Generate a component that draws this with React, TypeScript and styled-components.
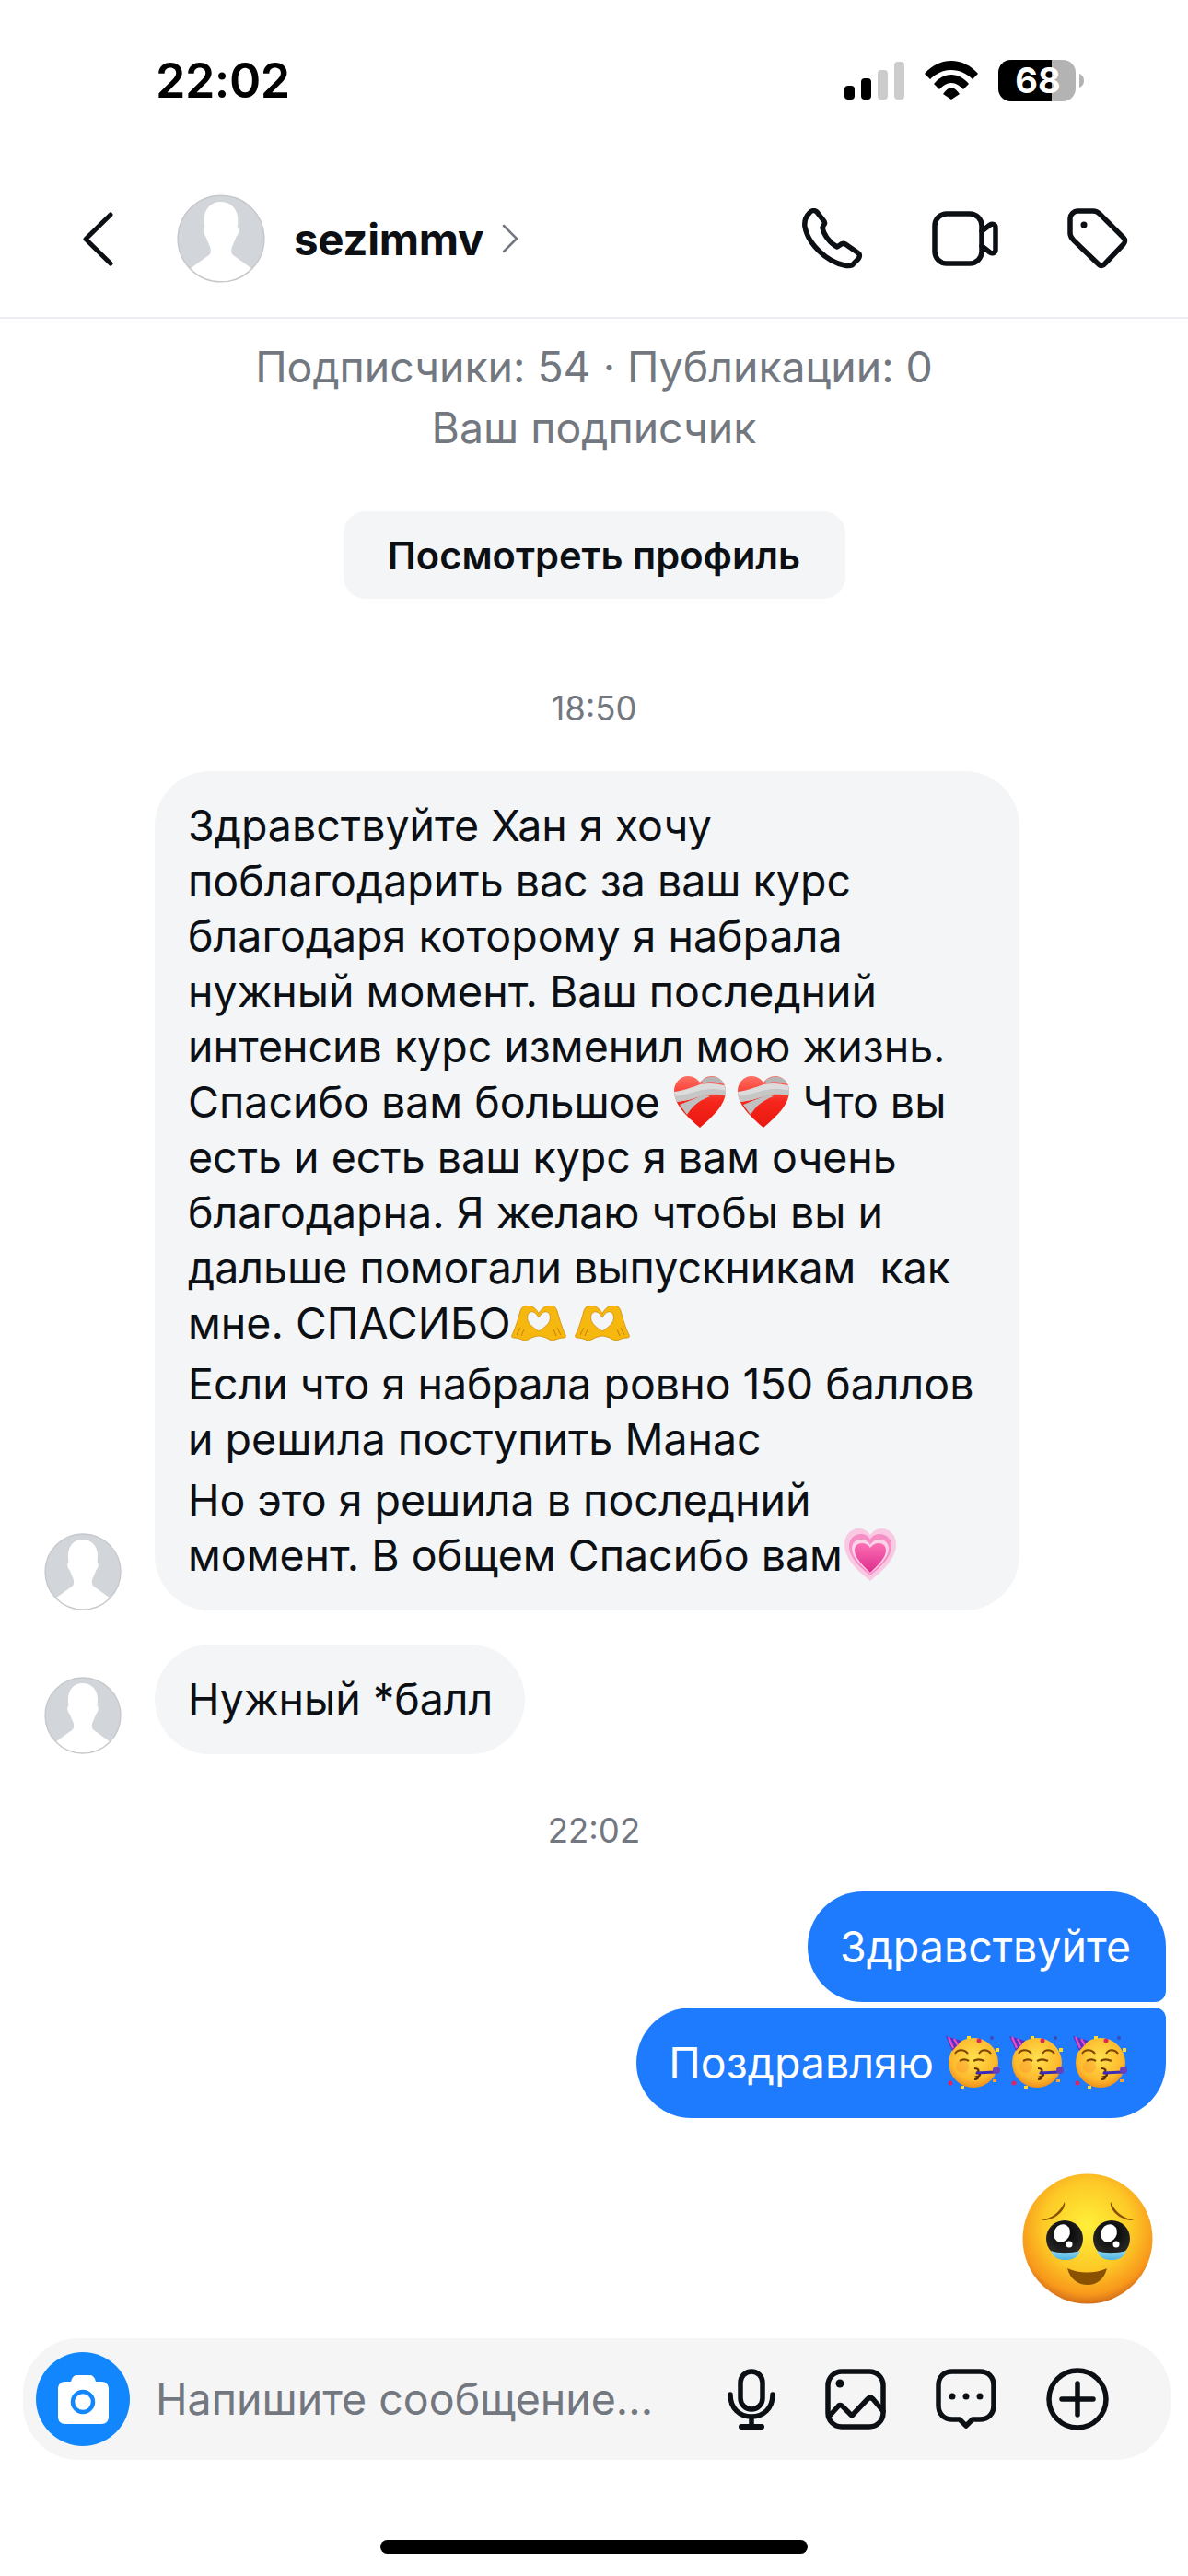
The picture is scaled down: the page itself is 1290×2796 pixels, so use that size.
import React from 'react';
import styled, { createGlobalStyle } from 'styled-components';

const Global = createGlobalStyle`
  html, body { margin: 0; padding: 0; background: #fff; }
  body { font-family: Inter, "Noto Sans", "Liberation Sans", sans-serif; color: #0c1014; }
`;

const Page = styled.div`
  width: 1290px;
  height: 2796px;
  display: flex;
  flex-direction: column;
  background: #fff;
  overflow: hidden;
`;

const StatusBar = styled.div`
  height: 174px;
  padding: 0 113px 0 169px;
  display: flex;
  align-items: center;
  justify-content: space-between;
  box-sizing: border-box;
  flex: none;
`;

const Time = styled.div`
  font-size: 52px;
  font-weight: 600;
  color: #000;
  letter-spacing: -0.5px;
`;

const StatusIcons = styled.div`
  display: flex;
  align-items: center;
  gap: 22px;
`;

const Header = styled.div`
  height: 172px;
  flex: none;
  box-sizing: border-box;
  padding: 0 65px 0 90px;
  display: flex;
  align-items: center;
  border-bottom: 2px solid #eceef1;
`;

const HeaderAvatar = styled.div`
  margin-left: 69px;
`;

const HeaderName = styled.div`
  font-size: 47.5px;
  font-weight: 700;
  margin-left: 31px;
  letter-spacing: -0.3px;
`;

const HeaderActions = styled.div`
  margin-left: auto;
  display: flex;
  align-items: center;
  gap: 75px;
`;

const Avatar = styled.svg<{ $size: number }>`
  width: ${(p) => p.$size}px;
  height: ${(p) => p.$size}px;
  flex: none;
  display: block;
`;

const Profile = styled.div`
  display: flex;
  flex-direction: column;
  align-items: center;
  padding-top: 19px;
  flex: none;
`;

const ProfileLine = styled.div`
  font-size: 46.4px;
  line-height: 66px;
  color: #737880;
`;

const ProfileButton = styled.div`
  margin-top: 58px;
  width: 545px;
  height: 95px;
  border-radius: 24px;
  background: #f3f5f7;
  display: flex;
  align-items: center;
  justify-content: center;
  font-size: 41.6px;
  font-weight: 600;
`;

const Stamp = styled.div<{ $top: number }>`
  margin-top: ${(p) => p.$top}px;
  font-size: 36.5px;
  line-height: 44px;
  color: #737880;
  text-align: center;
`;

const Thread = styled.div`
  flex: 1;
  display: flex;
  flex-direction: column;
`;

const IncomingRow = styled.div<{ $top: number }>`
  margin-top: ${(p) => p.$top}px;
  padding-left: 48px;
  display: flex;
  align-items: flex-end;
  gap: 36px;
`;

const IncomingBubble = styled.div<{ $width: number }>`
  width: ${(p) => p.$width}px;
  box-sizing: border-box;
  background: #f3f5f7;
  border-radius: 60px;
  padding: 29px 36px 30px;
  display: flex;
  flex-direction: column;
  gap: 6px;
`;

const Paragraph = styled.div``;

const Line = styled.div`
  font-size: 46.5px;
  line-height: 60px;
  white-space: pre;
  display: flex;
  align-items: center;
`;

const OutgoingColumn = styled.div`
  margin-top: 44px;
  padding-right: 24px;
  display: flex;
  flex-direction: column;
  align-items: flex-end;
  gap: 6px;
`;

const OutgoingBubble = styled.div<{ $first: boolean }>`
  height: 120px;
  box-sizing: border-box;
  padding: 0 ${(p) => (p.$first ? 38 : 41)}px 0 35px;
  background: #1f7bfd;
  color: #fff;
  font-size: 46.5px;
  white-space: pre;
  display: flex;
  align-items: center;
  border-radius: ${(p) => (p.$first ? '60px 60px 12px 60px' : '60px 12px 60px 60px')};
`;

const BigEmoji = styled.div`
  margin-top: 60px;
  padding-right: 38px;
  display: flex;
  justify-content: flex-end;
`;

const BigEmojiArt = styled.svg`
  display: block;
  width: 142px;
  height: 142px;
`;

const Composer = styled.div`
  margin: 0 19px 0 25px;
  height: 132px;
  flex: none;
  border-radius: 60px;
  background: #f5f5f6;
  display: flex;
  align-items: center;
  padding: 0 67px 0 14px;
`;

const CameraButton = styled.div`
  width: 102px;
  height: 102px;
  flex: none;
  border-radius: 50%;
  background: #1287fd;
  display: flex;
  align-items: center;
  justify-content: center;
`;

const Placeholder = styled.div`
  margin-left: 28px;
  font-size: 46.5px;
  color: #737880;
  white-space: nowrap;
`;

const ComposerActions = styled.div`
  margin-left: auto;
  display: flex;
  align-items: center;
  gap: 54px;
`;

const HomeArea = styled.div`
  height: 126px;
  flex: none;
  display: flex;
  align-items: flex-end;
  justify-content: center;
  padding-bottom: 24px;
  box-sizing: border-box;
`;

const HomeBar = styled.div`
  width: 464px;
  height: 15px;
  border-radius: 8px;
  background: #000;
`;

const Icon = styled.svg`
  display: block;
  flex: none;
  fill: none;
  stroke: #0c1014;
  stroke-width: 5.5;
  stroke-linecap: round;
  stroke-linejoin: round;
`;

const NameChevron = styled(Icon)`
  margin-left: 20px;
  stroke: #737880;
  stroke-width: 2.5;
`;

const InlineEmoji = styled.svg`
  width: 60px;
  height: 60px;
  flex: none;
  display: block;
`;

const HandsEmoji = styled.svg`
  width: 60px;
  height: 38px;
  flex: none;
  display: block;
`;

const EmojiGap = styled.span`
  width: 9px;
  flex: none;
`;

function UserAvatar({ size }: { size: number }) {
  return (
    <Avatar $size={size} viewBox="0 0 84 84">
      <circle cx="42" cy="42" r="41" fill="#d2d5da" />
      <path
        fill="#fff"
        d="M42 7C51 7 58 14 58 24C58 27 58 29 57.500 31C59.500 33 59 38 56.500 40C55 44 53 48 52 51C51.500 54 52 57 54 58L72 71C65 79 54 83 42 83C30 83 19 79 12 71L30 58C32 57 32.500 54 32 51C31 48 29 44 27.500 40C25 38 24.500 33 26.500 31C26 29 26 27 26 24C26 14 32 7 42 7Z"
      />
      <circle cx="42" cy="42" r="41" fill="none" stroke="#c6c8cc" strokeWidth="1.300" />
    </Avatar>
  );
}

function BandagedHeart() {
  return (
    <InlineEmoji viewBox="0 0 60 60">
      <defs>
        <linearGradient id="bh-red" x1="0" y1="0" x2="0" y2="1">
          <stop offset="0" stopColor="#ff7468" />
          <stop offset="0.5" stopColor="#f5261c" />
          <stop offset="1" stopColor="#e8160f" />
        </linearGradient>
        <clipPath id="bh-clip">
          <path d="M30 58C20 49 2 35 2 18 2 9 9 2 17 2c6 0 10 3 13 7 3-4 7-7 13-7 8 0 15 7 15 16 0 17-18 31-28 40z" />
        </clipPath>
      </defs>
      <g clipPath="url(#bh-clip)">
        <rect width="60" height="60" fill="url(#bh-red)" />
        <path d="M2 19C12 18 22 14 30 11 40 9 50 10 60 13V23C48 21 40 21 33 23 24 26 12 30 2 30z" fill="#dcdcdc" />
        <path d="M8 33L35 22 41 24C30 28 22 34 16 44z" fill="#c0c0c0" />
        <path d="M32 7C38 1 52 0 60 12 48 8 40 7 33 10z" fill="#b5b5b5" />
        <path d="M2 24C12 23 24 19 33 17 42 15 50 16 60 18V23C48 21 40 21 33 23 24 26 12 30 2 30z" fill="#c6c6c6" />
      </g>
    </InlineEmoji>
  );
}

function HeartHands() {
  return (
    <HandsEmoji viewBox="0 0 60 38">
      <path
        fillRule="evenodd"
        fill="#f6b80f"
        stroke="#d08a06"
        strokeWidth="0.8"
        d="M30 9C28 4 23 0 18 0 14 0 11 2 10 6 8 13 5 24 1 32 0 34 1 35 3 35 6 35 10 36 14 38 17 38 20 36 22 35 25 34 28 33 30 33 32 33 35 34 38 35 40 36 43 38 46 38 50 36 54 35 57 35 59 35 60 34 59 32 55 24 52 13 50 6 49 2 46 0 42 0 37 0 32 4 30 9ZM30 13C27 8 24 6 21 7 18 8 17 12 18 16 19 20 24 24 30 28 36 24 41 20 42 16 43 12 42 8 39 7 36 6 33 8 30 13Z"
      />
      <path d="M10 24L6 32M14 26L11 33M50 24L54 32M46 26L49 33" stroke="#c47f06" strokeWidth="1" fill="none" />
    </HandsEmoji>
  );
}

function GrowingHeart() {
  return (
    <InlineEmoji viewBox="0 0 60 60">
      <defs>
        <linearGradient id="gh-core" x1="0" y1="0" x2="0" y2="1">
          <stop offset="0" stopColor="#fb6fb4" />
          <stop offset="1" stopColor="#de2c8c" />
        </linearGradient>
      </defs>
      <path d="M30 58C18 48 2 35 2 18 2 8 9 1 18 1c5 0 9 3 12 7 3-4 7-7 12-7 9 0 16 7 16 17 0 17-16 30-28 40z" fill="#f9c9e4" />
      <path d="M30 52C20 44 7 33 7 20 7 12 13 7 20 7c4 0 8 2 10 6 2-4 6-6 10-6 7 0 13 5 13 13 0 13-13 24-23 32z" fill="#f58fc6" />
      <path d="M30 50C22 43 10 33 10 23c0-6 4-10 10-10 4 0 8 2 10 6 2-4 6-6 10-6 6 0 10 4 10 10 0 10-12 20-20 27z" fill="#fbd3e8" />
      <path d="M30 49C23 42 13 33 13 25c0-5 3-8 8-8 4 0 7 2 9 5 2-3 5-5 9-5 5 0 8 3 8 8 0 8-10 17-17 24z" fill="url(#gh-core)" />
    </InlineEmoji>
  );
}

function PartyFace() {
  return (
    <InlineEmoji viewBox="0 0 60 60">
      <defs>
        <radialGradient id="pf-face" cx="0.5" cy="0.4" r="0.6">
          <stop offset="0" stopColor="#ffe04d" />
          <stop offset="0.75" stopColor="#fdb92c" />
          <stop offset="1" stopColor="#ee8f1c" />
        </radialGradient>
      </defs>
      <circle cx="30" cy="30" r="27" fill="url(#pf-face)" />
      <path d="M0 1l17 5L7 17z" fill="#5b2fc4" />
      <path d="M3 2l5 12M9 4l4 7" stroke="#ec4fbe" strokeWidth="2.200" />
      <circle cx="18" cy="34" r="7" fill="#fb8f2e" opacity="0.35" />
      <path d="M10 20c3-5 10-5 14 0M36 20c3-5 9-5 13 0" stroke="#7a4500" strokeWidth="2" fill="none" />
      <path d="M15 28c3-2 7-2 10 0M30 28c3-2 8-2 12 0" stroke="#7a4500" strokeWidth="2.200" fill="none" />
      <path d="M31 36c4 0 6 2 3 5 4 1 4 3 0 4 2 1 1 3-3 3" stroke="#5a3000" strokeWidth="2.200" fill="none" />
      <path d="M33 41l21-1" stroke="#3b2bb8" strokeWidth="3" />
      <circle cx="55" cy="38" r="4" fill="#6b3fb8" />
      <rect x="54" y="14" width="4" height="4" fill="#ffd92e" />
      <circle cx="36" cy="6" r="2.500" fill="#e0245e" />
      <rect x="23" y="1" width="4" height="3" fill="#ffd92e" />
      <circle cx="50" cy="3" r="2" fill="#3b4bb8" />
      <circle cx="5" cy="52" r="2.500" fill="#e0245e" />
      <rect x="16" y="55" width="4" height="3" fill="#ffd92e" />
      <rect x="51" y="48" width="4" height="3" fill="#ff9f2e" />
    </InlineEmoji>
  );
}

function PleadingFace() {
  return (
    <BigEmojiArt viewBox="0 0 142 142">
      <defs>
        <radialGradient id="pl-face" cx="0.5" cy="0.4" r="0.62">
          <stop offset="0" stopColor="#fff03a" />
          <stop offset="0.55" stopColor="#fdc926" />
          <stop offset="0.85" stopColor="#f8981b" />
          <stop offset="1" stopColor="#c8641a" />
        </radialGradient>
        <radialGradient id="pl-eye" cx="0.5" cy="0.35" r="0.65">
          <stop offset="0" stopColor="#000" />
          <stop offset="1" stopColor="#2c2c2c" />
        </radialGradient>
        <linearGradient id="pl-tear" x1="0" y1="0" x2="0" y2="1">
          <stop offset="0" stopColor="#8fd8f2" />
          <stop offset="1" stopColor="#4cb4e4" />
        </linearGradient>
      </defs>
      <circle cx="71" cy="71" r="70.500" fill="url(#pl-face)" />
      <path d="M20 51c12-2 21-9 26-20 2 7-9 21-26 20z" fill="#8a5200" />
      <path d="M122 51c-12-2-21-9-26-20-2 7 9 21 26 20z" fill="#8a5200" />
      <circle cx="46" cy="71" r="20" fill="url(#pl-eye)" />
      <circle cx="97" cy="71" r="20" fill="url(#pl-eye)" />
      <ellipse cx="43" cy="65" rx="8.500" ry="10" fill="#fff" transform="rotate(30 43 65)" />
      <ellipse cx="94" cy="65" rx="8.500" ry="10" fill="#fff" transform="rotate(30 94 65)" />
      <circle cx="51" cy="77" r="3.500" fill="#fff" />
      <circle cx="102" cy="77" r="3.500" fill="#fff" />
      <path d="M31 84c8 3 22 3 32 0-3 8-9 10-16 10s-13-2-16-10z" fill="url(#pl-tear)" />
      <path d="M81 84c8 3 22 3 32 0-3 8-9 10-16 10s-13-2-16-10z" fill="url(#pl-tear)" />
      <path d="M49 103c13 6 30 6 43 0-3 12-11 18-21 18s-19-6-22-18z" fill="#8a5200" />
    </BigEmojiArt>
  );
}

const paragraphs: React.ReactNode[][] = [
  [
    'Здравствуйте Хан я хочу',
    'поблагодарить вас за ваш курс',
    'благодаря которому я набрала',
    'нужный момент. Ваш последний',
    'интенсив курс изменил мою жизнь.',
    <>
      Спасибо вам большое <BandagedHeart />
      <EmojiGap />
      <BandagedHeart /> Что вы
    </>,
    'есть и есть ваш курс я вам очень',
    'благодарна. Я желаю чтобы вы и',
    'дальше помогали выпускникам  как',
    <>
      мне. СПАСИБО
      <HeartHands />
      <EmojiGap />
      <HeartHands />
    </>,
  ],
  ['Если что я набрала ровно 150 баллов', 'и решила поступить Манас'],
  [
    'Но это я решила в последний',
    <>
      момент. В общем Спасибо вам
      <GrowingHeart />
    </>,
  ],
];

export default function App() {
  return (
    <Page>
      <Global />
      <StatusBar>
        <Time>22:02</Time>
        <StatusIcons>
          <svg width="65" height="41" viewBox="0 0 65 41">
            <rect x="0" y="26" width="11" height="15" rx="4" fill="#000" />
            <rect x="18" y="18" width="11" height="23" rx="4" fill="#000" />
            <rect x="36" y="9" width="11" height="32" rx="4" fill="#ccc" />
            <rect x="54" y="0" width="11" height="41" rx="4" fill="#ccc" />
          </svg>
          <svg width="58" height="42" viewBox="0 0 58 42">
            <path d="M0 14C8 5 18 0 29 0S50 5 58 14L52 20C46 14 38 10 29 10S12 14 6 20z" fill="#000" />
            <path d="M10 25C15 19 22 15 29 15S43 19 48 25L42 31C38 27 34 24 29 24S20 27 16 31z" fill="#000" />
            <path d="M20 36C23 32 26 29 29 29S35 32 38 36L29 42z" fill="#000" />
          </svg>
          <svg width="93" height="45" viewBox="0 0 93 45">
            <rect x="0" y="0" width="84" height="45" rx="14" fill="#b3b3b3" />
            <path d="M14 0h44v45H14C6 45 0 39 0 31V14C0 6 6 0 14 0z" fill="#000" />
            <path d="M88 15c3 1 5 4 5 7.500s-2 6.500-5 7.500z" fill="#b3b3b3" />
            <text x="43" y="36" fontFamily="Inter, sans-serif" fontWeight="700" fontSize="38" fill="#fff" textAnchor="middle">
              68
            </text>
          </svg>
        </StatusIcons>
      </StatusBar>

      <Header>
        <Icon width="33" height="59" viewBox="0 0 33 59">
          <path d="M30 3L3 29.500 30 56" strokeWidth="5" />
        </Icon>
        <HeaderAvatar>
          <UserAvatar size={96} />
        </HeaderAvatar>
        <HeaderName>sezimmv</HeaderName>
        <NameChevron width="18" height="32" viewBox="0 0 18 32">
          <path d="M2 2l14 14L2 30" />
        </NameChevron>
        <HeaderActions>
          <Icon width="66" height="66" viewBox="0 0 66 66">
            <path d="M8 5C10 2 14 2 16 4L23 13C25 15 25 17 23 19L22 21C23 28 30 38 38 42L41 40C43 38 45 38 47 39L60 48C63 50 63 52 61 55L56 60C54 63 50 63 46 62C26 58 6 38 3 20C2 13 4 9 8 5Z" />
          </Icon>
          <Icon width="72" height="60" viewBox="0 0 72 60">
            <rect x="3" y="3" width="51" height="54" rx="13" />
            <path d="M54 22L63 15C66 13 69 15 69 18V42C69 45 66 47 63 45L54 38" />
          </Icon>
          <Icon width="66" height="66" viewBox="0 0 66 66">
            <path d="M11 3H28C31 3 33 4 35 6L61 32C63 34 63 37 61 39L41 60C39 63 36 63 34 61L7 35C4 32 3 30 3 27V11C3 7 7 3 11 3Z" />
            <circle cx="18" cy="18" r="3.500" fill="#0c1014" stroke="none" />
          </Icon>
        </HeaderActions>
      </Header>

      <Thread>
        <Profile>
          <ProfileLine>Подписчики: 54 · Публикации: 0</ProfileLine>
          <ProfileLine>Ваш подписчик</ProfileLine>
          <ProfileButton>Посмотреть профиль</ProfileButton>
        </Profile>

        <Stamp $top={97}>18:50</Stamp>

        <IncomingRow $top={46}>
          <UserAvatar size={84} />
          <IncomingBubble $width={939}>
            {paragraphs.map((lines, i) => (
              <Paragraph key={i}>
                {lines.map((line, j) => (
                  <Line key={j}>{line}</Line>
                ))}
              </Paragraph>
            ))}
          </IncomingBubble>
        </IncomingRow>

        <IncomingRow $top={37}>
          <UserAvatar size={84} />
          <IncomingBubble $width={402}>
            <Line>Нужный *балл</Line>
          </IncomingBubble>
        </IncomingRow>

        <Stamp $top={61}>22:02</Stamp>

        <OutgoingColumn>
          <OutgoingBubble $first>Здравствуйте</OutgoingBubble>
          <OutgoingBubble $first={false}>
            Поздравляю <PartyFace />
            <EmojiGap />
            <PartyFace />
            <EmojiGap />
            <PartyFace />
          </OutgoingBubble>
        </OutgoingColumn>

        <BigEmoji>
          <PleadingFace />
        </BigEmoji>
      </Thread>

      <Composer>
        <CameraButton>
          <svg width="55" height="53" viewBox="0 0 55 53">
            <path
              fill="#fff"
              d="M20 0H35C37 0 39 2 40 4L41 7H47C52 7 55 10 55 15V45C55 50 52 53 47 53H8C3 53 0 50 0 45V15C0 10 3 7 8 7H14L15 4C16 2 18 0 20 0Z"
            />
            <circle cx="27" cy="29" r="11" fill="none" stroke="#1287fd" strokeWidth="4.500" />
          </svg>
        </CameraButton>
        <Placeholder>Напишите сообщение...</Placeholder>
        <ComposerActions>
          <Icon width="52" height="66" viewBox="0 0 52 66">
            <rect x="14" y="3" width="24" height="41" rx="12" />
            <path d="M3 28C3 43 13 52 26 52S49 43 49 28M26 52V62" />
            <path d="M15 63H37" strokeWidth="6" />
          </Icon>
          <Icon width="66" height="66" viewBox="0 0 66 66">
            <rect x="3" y="3" width="60" height="60" rx="15" />
            <circle cx="16" cy="16" r="4.500" fill="#0c1014" stroke="none" />
            <path d="M4 52L14 41C15 39 17 39 19 41L29 51 46 33C48 31 50 31 52 33L63 46" />
          </Icon>
          <Icon width="66" height="66" viewBox="0 0 66 66">
            <path d="M18 3H48C57 3 63 9 63 18V40C63 49 57 55 48 55H40L33 62 26 55H18C9 55 3 49 3 40V18C3 9 9 3 18 3Z" />
            <circle cx="18" cy="30" r="3.500" fill="#0c1014" stroke="none" />
            <circle cx="33" cy="30" r="3.500" fill="#0c1014" stroke="none" />
            <circle cx="48" cy="30" r="3.500" fill="#0c1014" stroke="none" />
          </Icon>
          <Icon width="68" height="68" viewBox="0 0 68 68">
            <circle cx="34" cy="34" r="31" />
            <path d="M34 17V51M17 34H51" />
          </Icon>
        </ComposerActions>
      </Composer>

      <HomeArea>
        <HomeBar />
      </HomeArea>
    </Page>
  );
}
